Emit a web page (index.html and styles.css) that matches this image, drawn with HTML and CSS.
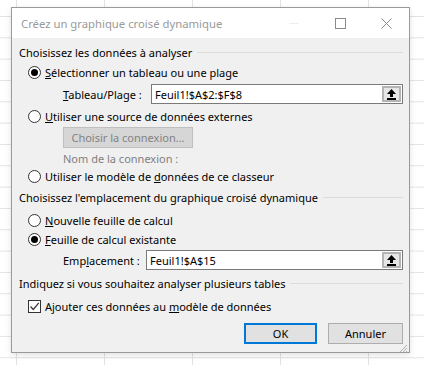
FILE: index.html
```html
<!DOCTYPE html>
<html lang="fr">
<head>
    <meta charset="UTF-8">
    <title>Créez un graphique croisé dynamique</title>
    <link rel="stylesheet" href="styles.css">
</head>
<body>
    <div class="dialog">
        <div class="titlebar">
            <span class="title">Créez un graphique croisé dynamique</span>
            <span class="win-btn win-min"></span>
            <span class="win-btn win-max"></span>
            <span class="win-btn win-close">
                <svg width="11" height="11" viewBox="0 0 11 11"><path d="M0.5 0.5 L10.5 10.5 M10.5 0.5 L0.5 10.5" stroke="#8a8a8a" stroke-width="1"/></svg>
            </span>
        </div>

        <div class="content">
            <div class="group-title h1"><span>Choisissez les données à analyser</span></div>

            <label class="option row-20"><span class="radio checked"></span><span><u>S</u>électionner un tableau ou une plage</span></label>

            <div class="field row-24">
                <span class="field-label w-tableau"><u>T</u>ableau/Plage :</span>
                <div class="ref-box">
                    <span class="ref-text">Feuil1!$A$2:$F$8</span>
                    <span class="ref-btn">
                        <svg width="11" height="11" viewBox="0 0 11 11"><path d="M5.5 0 L10 5 L7 5 L7 8 L4 8 L4 5 L1 5 Z" fill="#000"/><rect x="1" y="9" width="9" height="2" fill="#000"/></svg>
                    </span>
                </div>
            </div>

            <label class="option row-20"><span class="radio"></span><span><u>U</u>tiliser une source de données externes</span></label>

            <div class="indent row-22">
                <span class="btn-disabled">Choisir la connexion...</span>
            </div>

            <div class="indent row-20 muted">Nom de la connexion :</div>

            <label class="option row-16"><span class="radio"></span><span>Utiliser le modèle de <u>d</u>onnées de ce classeur</span></label>

            <div class="group-title h2"><span>Choisissez l'emplacement du graphique croisé dynamique</span></div>

            <label class="option row-20"><span class="radio"></span><span><u>N</u>ouvelle feuille de calcul</span></label>
            <label class="option row-19"><span class="radio checked"></span><span><u>F</u>euille de calcul existante</span></label>

            <div class="field row-22">
                <span class="field-label w-emplacement">Emp<u>l</u>acement :</span>
                <div class="ref-box">
                    <span class="ref-text">Feuil1!$A$15</span>
                    <span class="ref-btn">
                        <svg width="11" height="11" viewBox="0 0 11 11"><path d="M5.5 0 L10 5 L7 5 L7 8 L4 8 L4 5 L1 5 Z" fill="#000"/><rect x="1" y="9" width="9" height="2" fill="#000"/></svg>
                    </span>
                </div>
            </div>

            <div class="group-title h3"><span>Indiquez si vous souhaitez analyser plusieurs tables</span></div>

            <label class="option row-22">
                <span class="check">
                    <svg width="11" height="11" viewBox="0 0 11 11"><path d="M1.5 5.5 L4.3 8.5 L9.8 1.8" fill="none" stroke="#333" stroke-width="1.2"/></svg>
                </span>
                <span>Ajouter ces données au <u>m</u>odèle de données</span>
            </label>

            <div class="actions">
                <span class="btn btn-default">OK</span>
                <span class="btn">Annuler</span>
            </div>
        </div>
        <span class="grip">
            <svg width="10" height="10" viewBox="0 0 10 10"><path d="M9 2 L2 9 M9 5 L5 9 M9 8 L8 9" stroke="#b0b0b0" stroke-width="1"/></svg>
        </span>
    </div>
</body>
</html>
```

FILE: styles.css
```css
body {
    margin: 0;
    height: 365px;
    overflow: hidden;
    background-color: #fff;
    background-image:
        linear-gradient(to right, #e3e3e3 1px, transparent 1px),
        linear-gradient(to bottom, #e3e3e3 1px, transparent 1px);
    background-size: 88px 21.33px;
    background-position: 16px 16px;
    font-family: "Noto Sans", "Open Sans", sans-serif;
    font-size: 11px;
    color: #000;
    white-space: nowrap;
}
.dialog {
    position: relative;
    margin: 7px 0 0 11px;
    width: 397px;
    height: 344px;
    border: 1px solid #9a9a9a;
    background-color: #f0f0f0;
    box-shadow: 0 2px 6px rgba(0,0,0,0.12);
}
.titlebar {
    height: 30px;
    background-color: #fff;
    display: flex;
    align-items: center;
    padding-left: 9px;
}
.title {
    flex: 1;
    color: #9a9a9a;
    font-size: 11.3px;
}
.win-btn {
    width: 46px;
    display: flex;
    justify-content: center;
    align-items: center;
    height: 30px;
}
.win-min::after {
    content: "";
    width: 10px;
    border-top: 1px solid #eeeeee;
}
.win-max::after {
    content: "";
    width: 9px;
    height: 9px;
    border: 1px solid #8a8a8a;
}
.content {
    padding: 4px 6px 9px 7px;
}
.group-title {
    display: flex;
    align-items: center;
    height: 20px;
}
.group-title::after {
    content: "";
    flex: 1;
    border-top: 1px solid #dcdcdc;
    margin-left: 5px;
}
.group-title.h2 {
    height: 26px;
}
.group-title.h3 {
    height: 24px;
}
.option {
    display: flex;
    align-items: center;
    padding-left: 9px;
}
.row-16 { height: 16px; }
.row-19 { height: 19px; }
.row-20 { height: 20px; }
.row-22 { height: 22px; }
.row-24 { height: 24px; }
.radio {
    width: 11px;
    height: 11px;
    border: 1px solid #333;
    border-radius: 50%;
    background-color: #fff;
    margin-right: 4px;
    display: flex;
    justify-content: center;
    align-items: center;
}
.radio.checked::after {
    content: "";
    width: 7px;
    height: 7px;
    border-radius: 50%;
    background-color: #000;
}
.check {
    width: 11px;
    height: 11px;
    border: 1px solid #333;
    background-color: #fff;
    margin-right: 4px;
    display: flex;
    justify-content: center;
    align-items: center;
}
.field {
    display: flex;
    align-items: center;
    padding-left: 44px;
}
.field-label {
    flex: none;
}
.w-tableau { width: 88px; }
.w-emplacement { width: 83px; }
.ref-box {
    flex: 1;
    height: 18px;
    border: 1px solid #7a7a7a;
    background-color: #fff;
    display: flex;
    align-items: center;
}
.ref-text {
    flex: 1;
    padding-left: 3px;
}
.ref-btn {
    width: 19px;
    height: 16px;
    margin-right: 1px;
    box-sizing: border-box;
    border: 2px solid #b4b4b4;
    background-color: #e6e6e6;
    display: flex;
    justify-content: center;
    align-items: center;
}
.indent {
    display: flex;
    align-items: center;
    padding-left: 44px;
}
.muted {
    color: #7f7f7f;
}
.btn-disabled {
    height: 19px;
    width: 128px;
    border: 1px solid #bfbfbf;
    background-color: #d6d6d6;
    color: #838383;
    display: flex;
    align-items: center;
    justify-content: center;
}
.actions {
    display: flex;
    justify-content: flex-end;
    gap: 11px;
    margin-top: 6px;
}
.btn {
    width: 73px;
    height: 19px;
    border: 1px solid #adadad;
    background-color: #e1e1e1;
    display: flex;
    justify-content: center;
    align-items: center;
}
.btn-default {
    width: 69px;
    height: 17px;
    border: 2px solid #0078d7;
}
.grip {
    position: absolute;
    right: 1px;
    bottom: 1px;
    width: 10px;
    height: 10px;
}
```
